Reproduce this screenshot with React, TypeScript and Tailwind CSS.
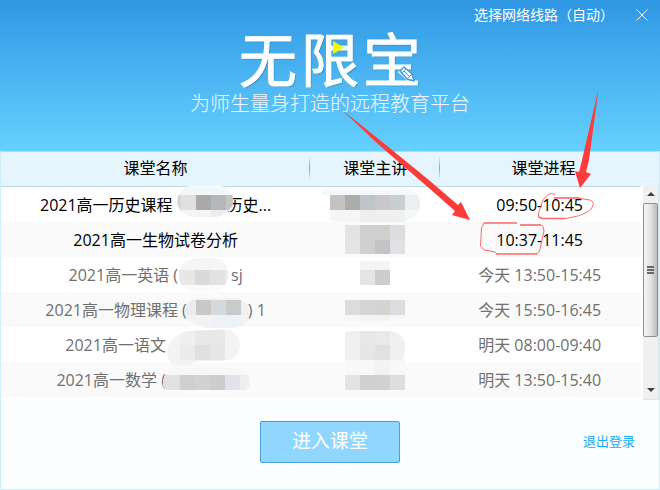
import React from 'react';

type Tile = [x: number, y: number, w: number, h: number, fill: string];

interface MosaicArt {
  x: number;
  y: number;
  width: number;
  size: string;
  blob?: string;
  blobFill?: string;
  tiles: Tile[];
}

interface Course {
  id: string;
  before: string;
  after?: string;
  time: string;
  active?: boolean;
  nameArt?: MosaicArt;
  teacherArt: MosaicArt;
}

const courses: Course[] = [
  {
    id: 'history',
    before: '2021高一历史课程',
    after: '历史...',
    time: '09:50-10:45',
    active: true,
    nameArt: {
      x: 172,
      y: 187,
      width: 54,
      size: 'w-[54px]',
      blob: 'M192 185H216C227 186 233 194 232 202C231 210 224 217 212 217H192C183 216 177 210 176 202C176 193 182 186 192 185Z',
      blobFill: '#f2f7fa',
      tiles: [
        [176, 195, 4, 15, '#d6d6d6'],
        [180, 195, 15, 15, '#e0e0de'],
        [195, 195, 15, 15, '#a9a9a9'],
        [210, 195, 15, 15, '#b6b7b9'],
        [225, 195, 7, 15, '#c6c6c6'],
        [180, 210, 30, 7, '#f5f5f5'],
        [210, 210, 15, 7, '#eceeee'],
      ],
    },
    teacherArt: {
      x: 345,
      y: 187,
      width: 60,
      size: 'w-[60px]',
      blob: 'M322 190L395 190C410 186 420 192 420 204C420 216 412 220 400 222H346L330 220V195H322Z',
      blobFill: '#f3f8fa',
      tiles: [
        [330, 195, 15, 15, '#c4c3c1'],
        [345, 195, 15, 15, '#acacab'],
        [360, 195, 15, 15, '#c0c4c8'],
        [375, 195, 15, 15, '#c9c7c9'],
        [390, 195, 15, 15, '#cbced0'],
        [405, 195, 15, 15, '#eeeeee'],
        [330, 210, 30, 12, '#f5f5f5'],
        [360, 210, 15, 12, '#eeeeec'],
        [375, 210, 30, 12, '#f0f0f1'],
      ],
    },
  },
  {
    id: 'biology',
    before: '2021高一生物试卷分析',
    time: '10:37-11:45',
    active: true,
    teacherArt: {
      x: 345,
      y: 222,
      width: 60,
      size: 'w-[60px]',
      tiles: [
        [345, 225, 15, 15, '#e3e3e4'],
        [360, 225, 15, 15, '#cecfcf'],
        [375, 225, 15, 15, '#d0cfcd'],
        [390, 225, 15, 15, '#dbdde0'],
        [345, 240, 15, 14, '#e4e4e5'],
        [360, 240, 15, 14, '#d1d0ce'],
        [375, 240, 15, 14, '#c4c4c4'],
        [390, 240, 15, 14, '#e0e1e4'],
      ],
    },
  },
  {
    id: 'english',
    before: '2021高一英语 (',
    after: 'sj',
    time: '今天 13:50-15:45',
    nameArt: {
      x: 178,
      y: 257,
      width: 53,
      size: 'w-[53px]',
      blob: 'M196 258H214C225 260 228 268 228 275C228 284 222 289 212 291H194C184 289 178 284 179 274C179 266 186 259 196 258Z',
      blobFill: '#f5f5f5',
      tiles: [
        [178, 270, 17, 15, '#e7e7e8'],
        [195, 270, 15, 15, '#dadad8'],
        [210, 270, 15, 15, '#e2e2e3'],
        [225, 270, 4, 15, '#ebe9e9'],
        [178, 285, 50, 6, '#fafafa'],
      ],
    },
    teacherArt: {
      x: 345,
      y: 257,
      width: 60,
      size: 'w-[60px]',
      tiles: [
        [360, 261, 30, 9, '#f4f4f3'],
        [360, 270, 15, 15, '#e4e4e4'],
        [375, 270, 15, 15, '#cdcdcd'],
      ],
    },
  },
  {
    id: 'physics',
    before: '2021高一物理课程 (',
    after: ') 1',
    time: '今天 15:50-16:45',
    nameArt: {
      x: 186,
      y: 292,
      width: 61,
      size: 'w-[61px]',
      blob: 'M196 298H236C244 300 249 307 248 315C248 322 240 328 230 328H204C193 326 186 320 184 312C185 304 189 300 196 298Z',
      blobFill: '#f3f3f3',
      tiles: [
        [184, 300, 11, 15, '#ececec'],
        [195, 300, 15, 15, '#c9c8c7'],
        [210, 300, 15, 15, '#d5d9db'],
        [225, 300, 15, 15, '#c9cbcb'],
        [240, 300, 9, 15, '#f0f0f0'],
        [210, 315, 30, 13, '#eef1f5'],
      ],
    },
    teacherArt: {
      x: 345,
      y: 292,
      width: 60,
      size: 'w-[60px]',
      tiles: [
        [345, 300, 15, 15, '#dddcda'],
        [360, 300, 15, 15, '#d2d4d6'],
        [375, 300, 15, 15, '#d4d3d1'],
        [390, 300, 15, 15, '#dcdde0'],
        [345, 315, 15, 7, '#f8f8f8'],
        [360, 315, 30, 6, '#f3f3f3'],
        [390, 315, 15, 3, '#f5f5f5'],
      ],
    },
  },
  {
    id: 'chinese',
    before: '2021高一语文',
    time: '明天 08:00-09:40',
    nameArt: {
      x: 166,
      y: 327,
      width: 80,
      size: 'w-[80px]',
      blob: 'M190 331L228 329C236 333 240 338 240 345C240 355 234 360 222 361H196C190 366 180 367 174 365C168 361 166 354 168 347C172 338 180 332 190 331Z',
      blobFill: '#f3f3f3',
      tiles: [
        [180, 330, 15, 15, '#efefef'],
        [195, 330, 30, 15, '#e8e8e8'],
        [180, 345, 15, 15, '#ebebeb'],
        [195, 345, 15, 15, '#e0e0df'],
        [210, 345, 15, 15, '#e6e6e6'],
      ],
    },
    teacherArt: {
      x: 345,
      y: 327,
      width: 60,
      size: 'w-[60px]',
      blob: 'M345 332L354 331H392C400 333 405 338 405 345C405 352 405 356 402 360H405V375H345Z',
      blobFill: '#f0f0f0',
      tiles: [
        [360, 331, 15, 14, '#e8e8e6'],
        [375, 331, 15, 14, '#e9e9e9'],
        [360, 345, 15, 15, '#e6e6e6'],
        [375, 345, 15, 15, '#e1e1e1'],
        [345, 360, 30, 15, '#f8f8f8'],
        [375, 360, 15, 15, '#f3f3f3'],
        [390, 360, 15, 15, '#f8f8f8'],
      ],
    },
  },
  {
    id: 'maths',
    before: '2021高一数学 (',
    time: '明天 13:50-15:40',
    nameArt: {
      x: 166,
      y: 362,
      width: 89,
      size: 'w-[89px]',
      blob: 'M172 368H244C249 372 250 380 249 386C246 392 238 394 226 394H184C170 392 162 388 163 384C163 378 166 370 172 368Z',
      blobFill: '#f7f7f7',
      tiles: [
        [163, 375, 17, 15, '#e1e1e1'],
        [180, 375, 15, 15, '#cfcfce'],
        [195, 375, 15, 15, '#d1d2d1'],
        [210, 375, 15, 15, '#cfcdcc'],
        [225, 375, 15, 15, '#e0e3e7'],
        [240, 375, 10, 15, '#eeeeee'],
        [163, 390, 87, 5, '#fafbfd'],
      ],
    },
    teacherArt: {
      x: 345,
      y: 362,
      width: 60,
      size: 'w-[60px]',
      tiles: [
        [345, 375, 15, 15, '#e3e3e3'],
        [360, 375, 15, 15, '#d0d0ce'],
        [375, 375, 15, 15, '#d1d1d1'],
        [390, 375, 15, 15, '#dcdee1'],
      ],
    },
  },
];

function Mosaic({ id, art }: { id: string; art: MosaicArt }) {
  return (
    <svg
      aria-hidden="true"
      viewBox={`${art.x} ${art.y} ${art.width} 35`}
      className={`relative z-10 h-[35px] shrink-0 overflow-visible ${art.size}`}
    >
      {art.blob && (
        <>
          <clipPath id={id}>
            <path d={art.blob} />
          </clipPath>
          <path d={art.blob} fill={art.blobFill} />
        </>
      )}
      <g clipPath={art.blob ? `url(#${id})` : undefined} shapeRendering="crispEdges">
        {art.tiles.map(([x, y, w, h, fill]) => (
          <rect key={`${x}-${y}`} x={x} y={y} width={w} height={h} fill={fill} />
        ))}
      </g>
    </svg>
  );
}

function Divider() {
  return <span className="absolute top-1 right-0 h-6 w-px bg-linear-to-b from-[#e5f4fd] via-[#a0a0a0] to-[#e5f4fd]" />;
}

function ScrollBar() {
  return (
    <div className="absolute top-[34px] right-0 bottom-0 flex w-[18px] flex-col bg-white pl-0.5">
      <div className="flex grow flex-col items-center border-r border-b border-[#dfe6ea] bg-[#f0f0f0]">
        <button type="button" aria-label="向上滚动" className="flex h-[18px] w-full items-center justify-center">
          <svg viewBox="0 0 8 4" className="h-1 w-2">
            <path d="M0 4L4 0L8 4Z" fill="#404040" />
          </svg>
        </button>
        <div className="flex h-[134px] w-full flex-col items-center justify-center gap-px rounded-xs border border-[#8f8f8f] bg-linear-to-r from-[#f5f5f5] via-[#e4e4e6] to-[#b9bbbf]">
          <span className="h-0.5 w-[7px] bg-[#666]" />
          <span className="h-0.5 w-[7px] bg-[#666]" />
          <span className="h-0.5 w-[7px] bg-[#666]" />
        </div>
        <button type="button" aria-label="向下滚动" className="mt-auto flex h-[18px] w-full items-center justify-center">
          <svg viewBox="0 0 8 4" className="h-1 w-2">
            <path d="M0 0L4 4L8 0Z" fill="#404040" />
          </svg>
        </button>
      </div>
    </div>
  );
}

function Annotations() {
  return (
    <svg aria-hidden="true" viewBox="0 0 660 490" className="pointer-events-none absolute top-0 left-0 z-20 h-[490px] w-[660px]">
      <g fill="#fc3b3b">
        <path d="M341 109L386 145L430 181L458 205L461 202L470 220L452 215L455 211L430 189L379 145Z" />
        <path d="M598.500 89L589 160L586 172L591 174L580 188L575 171L579 172L582 160Z" />
      </g>
      <g fill="none" stroke="#f95050" strokeOpacity="0.85" strokeLinejoin="round">
        <path d="M555 194.500L551 193.500C545 196 543 199 541 206L538.500 213V217" />
        <path d="M554 198H580" strokeWidth="1.600" />
        <path d="M538.500 217L542 218.500H565" strokeWidth="1.600" />
        <path d="M565 218.500C575 217 585 215 591 209C594 205 594 201 590 200L580 198.500" />
        <path d="M484 223H517" strokeWidth="1.600" />
        <path d="M484 223L481.500 228L480.500 246L484 250L495 252L497 254" />
        <path d="M496 254H537" strokeWidth="1.600" />
        <path d="M537 254L539.500 251L542 240L544 231L543 226.500L541 225" />
        <path d="M520 225H541" strokeWidth="1.600" />
      </g>
    </svg>
  );
}

export default function App() {
  return (
    <div className="relative flex min-h-screen flex-col overflow-hidden bg-[#fbfeff] font-['Open_Sans','Noto_Sans_CJK_SC',sans-serif]">
      <header className="flex h-[151px] flex-col items-center bg-linear-to-b from-[#2f97e3] to-[#66d1ff] text-white">
        <div className="flex h-[30px] w-full items-center justify-end gap-[22px] pr-3">
          <button type="button" className="text-sm">选择网络线路（自动）</button>
          <button type="button" aria-label="关闭">
            <svg viewBox="0 0 12 12" className="size-3" stroke="currentColor" strokeWidth="1">
              <path d="M0.500 0.500L11.500 11.500M11.500 0.500L0.500 11.500" />
            </svg>
          </button>
        </div>
        <div className="relative">
          <h1 className="flex h-[60px] items-center gap-1 text-[58px] leading-none font-normal [-webkit-text-stroke:1px_white] [text-shadow:1px_1px_1px_#2b82b8]">
            <span>无</span>
            <span>限</span>
            <span>宝</span>
          </h1>
          <svg aria-hidden="true" viewBox="239 30 182 60" className="absolute inset-0 h-full w-full">
            <path d="M333 41L344 47.500L333 54Z" fill="#f7f700" />
            <g transform="translate(400 67)" strokeLinejoin="round">
              <path d="M0 4L4 0L12 7L14 14L7 12Z" fill="#fff" stroke="#3a9ddc" strokeWidth="1.500" />
              <path d="M2 6L6 2M4 4L9.500 9.500M7 12L12 7" stroke="#3a9ddc" strokeWidth="1" />
            </g>
          </svg>
        </div>
        <p className="mt-1 text-xl leading-5 font-extralight text-white/90">为师生量身打造的远程教育平台</p>
      </header>

      <main className="relative border-x border-[#cdeefb] bg-white pb-[3px]">
        <table className="w-full table-fixed border-collapse text-base leading-[34px]">
          <thead>
            <tr className="h-[34px] border-t border-b border-[#bdd7e5] bg-[#e5f4fd] leading-8 text-black">
              <th className="relative w-[47%] px-0 pt-0 pb-0.5 font-normal">课堂名称<Divider /></th>
              <th className="relative w-[130px] px-0 pt-0 pb-0.5 font-normal">课堂主讲<Divider /></th>
              <th className="pt-0 pr-3 pb-0.5 pl-0 font-normal">课堂进程</th>
            </tr>
          </thead>
          <tbody>
            {courses.map((c) => (
              <tr key={c.id} className={`${c.active ? 'text-black' : 'text-[#707070]'} even:bg-[#fafafa]`}>
                <td className="p-0">
                  <div className="flex h-[35px] items-center justify-center whitespace-nowrap">
                    <span>{c.before}</span>
                    {c.nameArt && <Mosaic id={`name-${c.id}`} art={c.nameArt} />}
                    {c.after && <span>{c.after}</span>}
                  </div>
                </td>
                <td className="p-0">
                  <div className="flex h-[35px] justify-center">
                    <Mosaic id={`teacher-${c.id}`} art={c.teacherArt} />
                  </div>
                </td>
                <td className="py-0 pr-5 pl-0 text-center">{c.time}</td>
              </tr>
            ))}
          </tbody>
        </table>
        <ScrollBar />
      </main>

      <footer className="grid grow grid-cols-3 items-center border-x border-b border-[#cdeefb] pb-1.5">
        <button type="button" className="col-start-2 h-[42px] w-[140px] justify-self-center rounded-xs border border-[#4d9fdb] bg-[#90d7ff] text-[19px] text-white">
          进入课堂
        </button>
        <a href="#logout" className="justify-self-end pr-6 text-[13px] text-[#17a9f3]">退出登录</a>
      </footer>
      <Annotations />
    </div>
  );
}
